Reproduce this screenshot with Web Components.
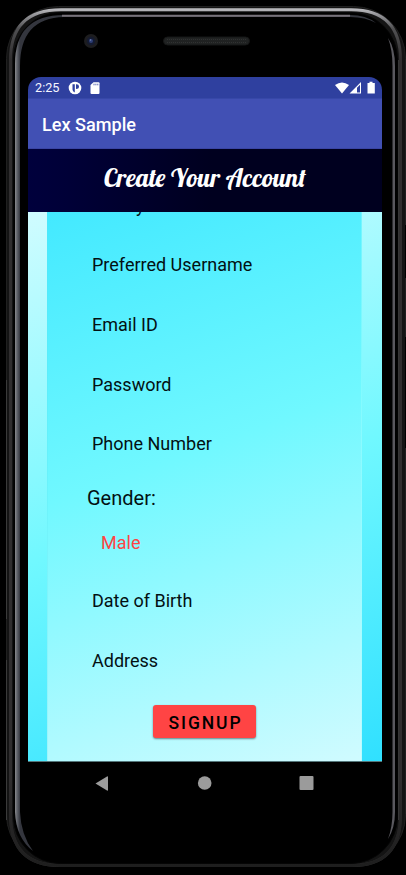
<!DOCTYPE html>
<html lang="en"><head><meta charset="utf-8"><title>Lex Sample</title>
<style>html,body{margin:0;background:#000;width:406px;height:875px;overflow:hidden;font-family:Roboto,"Liberation Sans",sans-serif}</style></head>
<body>
<phone-frame>
  <status-bar>2:25</status-bar>
  <app-bar>Lex Sample</app-bar>
  <page-heading>Create Your Account</page-heading>
  <signup-form>
    <form-field class="first">Family Name</form-field>
    <form-field>Preferred Username</form-field>
    <form-field>Email ID</form-field>
    <form-field>Password</form-field>
    <form-field>Phone Number</form-field>
    <form-field kind="label">Gender:</form-field>
    <form-field kind="choice">Male</form-field>
    <form-field>Date of Birth</form-field>
    <form-field>Address</form-field>
    <action-button>SIGNUP</action-button>
  </signup-form>
  <nav-keys></nav-keys>
</phone-frame>
<script>
const define=(name,html)=>customElements.define(name,class extends HTMLElement{
  constructor(){super();this.attachShadow({mode:'open'}).innerHTML=html}
});
define('phone-frame',`<style>
:host{display:block;position:relative;width:406px;height:875px;background:#000}
.shell{position:absolute;inset:0}
.screen{position:relative;display:flex;flex-direction:column;box-sizing:border-box;padding:77px 24px 0 28px;height:875px}
</style>
<svg class="shell" width="406" height="875" viewBox="0 0 406 875" fill="none">
<defs>
<linearGradient id="t" x1="0" y1="8" x2="0" y2="60" gradientUnits="userSpaceOnUse"><stop stop-color="#c0c0c4"/><stop offset=".12" stop-color="#98989c"/><stop offset=".4" stop-color="#505052"/><stop offset="1" stop-color="#302e2f"/></linearGradient>
<linearGradient id="l" x1="15" y1="0" x2="20" y2="0" gradientUnits="userSpaceOnUse"><stop stop-color="#8a8a8d"/><stop offset=".4" stop-color="#62656c"/><stop offset="1" stop-color="#34363e"/></linearGradient>
<linearGradient id="b" x1="0" y1="780" x2="0" y2="866" gradientUnits="userSpaceOnUse"><stop stop-color="#1c1c1c" stop-opacity="0"/><stop offset="1" stop-color="#1e1e1e"/></linearGradient>
</defs>
<rect x="6.500" y="6.500" width="399" height="860" rx="52" fill="#141414" stroke="#202020"/>
<path d="M10.500 815V60Q10.500 9.800 61 9.800H351Q400.500 9.800 400.500 60V815Q400.500 865.500 352 865.500H60Q10.500 865.500 10.500 815Z" stroke="url(#t)" stroke-width="3"/>
<path d="M10.500 780V815Q10.500 865.500 60 865.500H352Q400.500 865.500 400.500 815V780" stroke="url(#b)" stroke-width="3"/>
<rect x="13.500" y="12.500" width="384" height="851" rx="47" fill="#000" stroke="#050505"/>
<path d="M15 812V64Q15 15 64 15H350Q366 15 376 23Q366 17 350 17H64Q20 18 20 66V812Q21 835 33 851Q16 838 15 812Z" fill="url(#l)"/>
<path d="M62 15.800H350" stroke="#77727a" stroke-width="2"/>
<path d="M388 38Q395 48 395 66V812Q395 828 388 839Q392.500 827 392.500 812V66Q392.500 50 388 38Z" fill="#59585e"/>
<path d="M396.500 58V820" stroke="#000" stroke-width="2"/><path d="M398.500 60V820" stroke="#353535"/>
<circle cx="91" cy="41" r="7" fill="#1d1d1f"/><circle cx="91" cy="41" r="4.200" fill="#141a30"/><circle cx="91" cy="41" r="2" fill="#2c3d75"/><circle cx="90.500" cy="40" r=".8" fill="#7888b8"/>
<rect x="163.500" y="37" width="86" height="8" rx="4" fill="#202222" stroke="#151616"/>
<path d="M167 39.500H246M167 42.500H246" stroke="#303232" stroke-dasharray="1 1"/>
<path d="M6.500 380V619M6.500 660V820" stroke="#3a3a3a"/><path d="M405.500 225V278M405.500 337V448" stroke="#000"/>
</svg><div class="screen"><slot></slot></div>`);
define('status-bar',`<style>
:host{display:flex;align-items:center;height:21px;background:#2f409f;border-radius:13px 13px 0 0;color:#f5f6ff;font-size:12.7px;line-height:21px;padding:0 6px 0 7px;box-sizing:border-box}
.a{margin-left:9px}.b{margin-left:auto}svg{display:block}</style>
<slot></slot>
<svg class="a" width="34" height="14" viewBox="0 0 34 14"><circle cx="7" cy="7" r="6.300" fill="#fff"/><path d="M4.500 3.300H6.800V11.600Q4.500 10.500 4.500 8.500ZM8 3.300Q11 3 11 5.500T8 8Z" fill="#2f409f"/><path d="M25.500 1.200H30.500Q31.500 1.200 31.500 2.200V12Q31.500 13 30.500 13H23.500Q22.500 13 22.500 12V4Z" fill="#fff"/><path d="M26 2.700V4.300M27.900 2.700V4.300M29.800 2.700V4.300" stroke="#2f409f" stroke-width=".8"/></svg>
<svg class="b" width="41" height="14" viewBox="0 0 41 14" fill="#fff"><path d="M0 4Q7 -1 14 4L7 12.500Z"/><path fill-rule="evenodd" d="M14.500 12.500L26 1V12.500ZM22 6.800V11.500H25V3.800Z"/><path d="M32.500 2H34.500V.8H37.500V2H39.800V12.500H32.500Z"/></svg>`);
define('app-bar',`<style>:host{display:flex;align-items:center;height:51px;box-sizing:border-box;padding:2px 14px 0;background:#4150b4;box-shadow:inset 0 1px #3748a8,inset 0 -1px #3a45a4;color:#fff;font-size:18.100px;font-weight:500}</style><span><slot></slot></span>`);
define('page-heading',`<style>:host{display:flex;justify-content:center;height:63px;box-sizing:border-box;padding-top:14px;background:linear-gradient(90deg,#00003c 0,#000038 10%,#00001f 52%,#00001f);color:#fff;font:400 25.400px/30px "Lobster","Liberation Serif",serif}
span{display:block;white-space:nowrap}</style><span><slot></slot></span>`);
define('signup-form',`<style>
:host{display:block;height:550px;overflow:hidden;padding:0 20px 0 19px;box-sizing:border-box;background:linear-gradient(160deg,#d0fcff 0,#70f8ff 52%,#30e0ff 100%);box-shadow:inset 0 -1px #55777b}
.card{display:flex;flex-direction:column;height:549px;box-shadow:inset 1px 0 #60dfeb33,inset -1px 0 #a0ffff66;background:linear-gradient(160deg,#43e9ff 0,#70f8ff 44%,#d0fbff 100%)}
</style><div class="card"><slot></slot></div>`);
define('form-field',`<style>
:host{display:flex;align-items:center;flex:none;height:59.700px;padding-left:45px;color:#031012;font-size:18px;white-space:nowrap}
:host(.first){margin-top:-36.700px}
:host([kind=label]){height:49.200px;padding-left:40px;font-size:20px}
:host([kind=choice]){height:38.500px;margin-bottom:9.500px;padding-left:54px;color:#ff4444}
</style><span><slot></slot></span>`);
define('action-button',`<style>:host{display:block;flex:none;padding:15px 0 0 106px}
button{display:block;width:103px;height:33px;padding:2px 0 0 2px;border:0;border-radius:3px;background:#ff4444;color:#000;font:500 17.500px Roboto,sans-serif;letter-spacing:1.900px;box-shadow:0 1px 2px #0007}</style><button><slot></slot></button>`);
define('nav-keys',`<style>:host{display:block;height:44px}svg{display:block}</style><svg width="354" height="44" fill="#9b9b9b"><path d="M67.500 21.500L79 14.500Q80 14 80 15V28Q80 29 79 28.500Z"/><circle cx="176.700" cy="21" r="6.800"/><rect x="271.500" y="14" width="14" height="14" rx="1"/></svg>`);
</script></body></html>
